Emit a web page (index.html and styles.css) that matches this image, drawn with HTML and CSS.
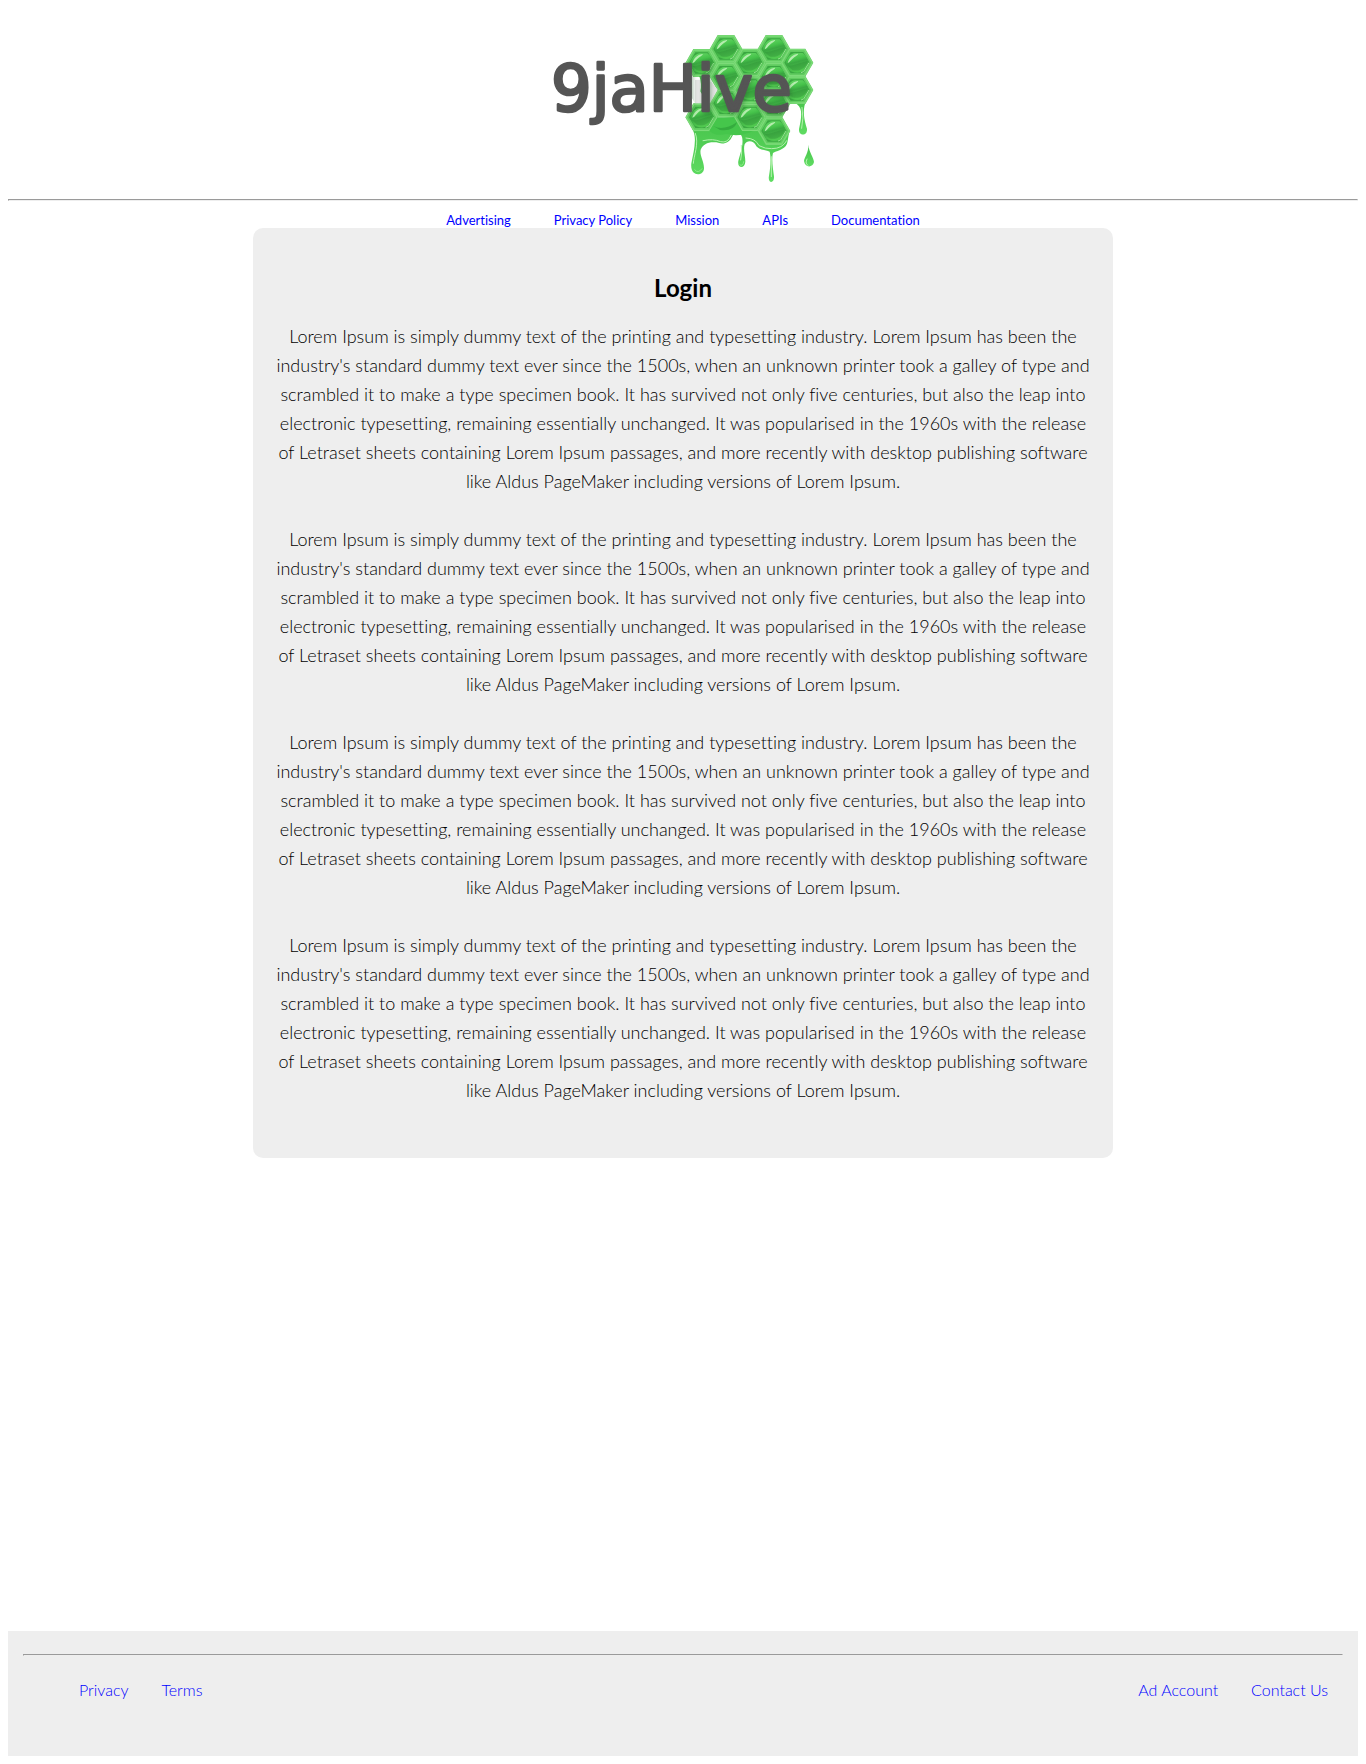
FILE: index.html
```html
<!DOCTYPE html>
<html lang="en">
<head>
<meta charset="utf-8">
<meta name="viewport" content="width=device-width, initial-scale=1">
<title>9jaHive - Login</title>
<link rel="stylesheet" href="styles.css">
</head>
<body>
<header class="header">
  <svg class="logo" viewBox="0 0 858 537" role="img" aria-label="9jaHive">
    <defs>
      <linearGradient id="cell" x1="0" y1="0" x2="0.3" y2="1">
        <stop offset="0" stop-color="#6cdc6a"/>
        <stop offset="0.4" stop-color="#45c24a"/>
        <stop offset="0.55" stop-color="#3aa741"/>
        <stop offset="1" stop-color="#51c950"/>
      </linearGradient>
      <linearGradient id="drip" x1="0" y1="0" x2="0" y2="1">
        <stop offset="0" stop-color="#46c24a"/>
        <stop offset="1" stop-color="#5fdc62"/>
      </linearGradient>
      <filter id="shade" x="-10%" y="-20%" width="120%" height="140%">
        <feGaussianBlur stdDeviation="7"/>
      </filter>
      <clipPath id="comb-area"><path d="M460 87H508L533 45H582L607 87H650L675 45H726L750 87H796L820 128L796 168L820 210L796 252H752L726 292L748 333L724 375H675L650 333H460L440 293L465 250L440 208V128Z"/></clipPath>
      <g id="hex">
        <path d="M-49 0L-25-42H25L49 0L25 42H-25Z" fill="#61cc60"/>
        <path d="M-46 0L-23-39H23L46 0L23 39H-23Z" fill="none" stroke="#7ddb79" stroke-width="4"/>
        <path d="M-38 0L-19-32H19L38 0L19 32H-19Z" fill="#3aa841"/>
        <path d="M-34 4C-33-12-22-26-6-29H17C27-22 33-11 34 0L18 27C0 34-18 28-24 22Z" fill="url(#cell)"/>
        <path d="M-28 1C-24-14-13-25 2-27C8-25-8-18-14-11C-19-6-24 1-28 1Z" fill="#b4edae"/>
        <path d="M-29 8C-12 12 15-2 32-5C28 17 6 28-14 22Z" fill="#2c8a35" opacity=".35"/>
        <path d="M12 30L20 27L36 0" fill="none" stroke="#95e48f" stroke-width="3"/>
      </g>
    </defs>
    <path fill="url(#drip)" d="M448 302L460 333C471 360 460 400 454 430C449 472 490 470 492 446C493 425 478 406 482 389C489 372 506 364 529 367C551 375 568 368 576 350C584 334 605 335 607 356C610 380 599 405 595 423C591 446 615 447 616 425C616 408 609 388 614 373C621 359 641 362 647 375C655 391 676 389 689 395C694 415 691 445 687 467C682 491 704 492 702 469C699 446 694 417 699 399C718 389 740 388 743 363L748 333L700 282Z"/>
    <path fill="url(#drip)" d="M744 235L796 248C787 273 793 301 801 326C803 350 775 349 777 327C784 297 790 266 771 253Z"/>
    <path fill="url(#drip)" d="M805 374C807 396 821 412 822 426C818 445 794 443 792 423C793 410 806 399 805 374Z"/>
    <g fill="none" stroke="#b5f3ae" stroke-width="3" stroke-linecap="round">
      <path d="M466 340C478 370 461 408 460 430M489 362Q520 355 542 365Q563 371 574 345M604 376Q607 400 602 420M618 354Q647 355 657 377Q676 387 695 386Q728 386 740 362M694 410V470M786 262Q792 295 785 325M801 417Q794 432 804 436"/>
      <path d="M464 449Q474 463 486 446M600 435Q609 440 611 425" stroke="#8ceb87"/>
    </g>
    <use href="#hex" x="485" y="129"/>
    <use href="#hex" x="558" y="87"/>
    <use href="#hex" x="558" y="170"/>
    <use href="#hex" x="558" y="250"/>
    <use href="#hex" x="630" y="128"/>
    <use href="#hex" x="630" y="210"/>
    <use href="#hex" x="702" y="87"/>
    <use href="#hex" x="702" y="170"/>
    <use href="#hex" x="702" y="250"/>
    <use href="#hex" x="771" y="128"/>
    <use href="#hex" x="771" y="210"/>
    <use href="#hex" x="485" y="292"/>
    <use href="#hex" x="630" y="292"/>
    <use href="#hex" x="702" y="333"/>
    <path d="M508 332L533 292H582L606 333H640Q600 352 560 342Q525 350 508 332Z" fill="#45c64b"/>
    <path d="M520 318Q550 334 592 306Q580 336 540 330Z" fill="#35ac3e"/>
    <path d="M465 180Q500 177 515 187L533 209L510 250H465Z" fill="#e5e5e5"/>
    <path d="M478 168H510Q493 182 492 214Q487 229 481 214Q486 193 478 168Z" fill="#43b84a"/>
    <g clip-path="url(#comb-area)">
      <text class="logo-shadow" x="37" y="279" filter="url(#shade)">9jaHive</text>
    </g>
    <text class="logo-text" x="33" y="274">9jaHive</text>
  </svg>
  <hr class="rule">
  <nav class="nav" aria-label="Main">
    <a href="#">Advertising</a>
    <a href="#">Privacy Policy</a>
    <a href="#">Mission</a>
    <a href="#">APIs</a>
    <a href="#">Documentation</a>
  </nav>
</header>
<main class="panel">
  <h1 class="title">Login</h1>
  <p>Lorem Ipsum is simply dummy text of the printing and typesetting industry. Lorem Ipsum has been the industry's standard dummy text ever since the 1500s, when an unknown printer took a galley of type and scrambled it to make a type specimen book. It has survived not only five centuries, but also the leap into electronic typesetting, remaining essentially unchanged. It was popularised in the 1960s with the release of Letraset sheets containing Lorem Ipsum passages, and more recently with desktop publishing software like Aldus PageMaker including versions of Lorem Ipsum.</p>
  <p>Lorem Ipsum is simply dummy text of the printing and typesetting industry. Lorem Ipsum has been the industry's standard dummy text ever since the 1500s, when an unknown printer took a galley of type and scrambled it to make a type specimen book. It has survived not only five centuries, but also the leap into electronic typesetting, remaining essentially unchanged. It was popularised in the 1960s with the release of Letraset sheets containing Lorem Ipsum passages, and more recently with desktop publishing software like Aldus PageMaker including versions of Lorem Ipsum.</p>
  <p>Lorem Ipsum is simply dummy text of the printing and typesetting industry. Lorem Ipsum has been the industry's standard dummy text ever since the 1500s, when an unknown printer took a galley of type and scrambled it to make a type specimen book. It has survived not only five centuries, but also the leap into electronic typesetting, remaining essentially unchanged. It was popularised in the 1960s with the release of Letraset sheets containing Lorem Ipsum passages, and more recently with desktop publishing software like Aldus PageMaker including versions of Lorem Ipsum.</p>
  <p>Lorem Ipsum is simply dummy text of the printing and typesetting industry. Lorem Ipsum has been the industry's standard dummy text ever since the 1500s, when an unknown printer took a galley of type and scrambled it to make a type specimen book. It has survived not only five centuries, but also the leap into electronic typesetting, remaining essentially unchanged. It was popularised in the 1960s with the release of Letraset sheets containing Lorem Ipsum passages, and more recently with desktop publishing software like Aldus PageMaker including versions of Lorem Ipsum.</p>
</main>
<footer class="footer">
  <hr class="rule">
  <nav class="footer-nav" aria-label="Footer">
    <div class="links">
      <a href="#">Privacy</a>
      <a href="#">Terms</a>
    </div>
    <div class="links">
      <a href="#">Ad Account</a>
      <a href="#">Contact Us</a>
    </div>
  </nav>
</footer>
</body>
</html>
```
FILE: styles.css
```css
* {
  box-sizing: border-box;
}

body {
  display: flex;
  flex-direction: column;
  min-height: 100vh;
  margin: 0;
  padding: 8px;
  background: #fff;
  color: #000;
  font-family: Lato, "Liberation Sans", sans-serif;
  font-weight: 300;
  font-variant-ligatures: no-common-ligatures;
}

a {
  color: #00f;
  text-decoration: none;
}

.header {
  display: flex;
  flex-direction: column;
  padding-top: 12px;
}

.logo {
  display: block;
  align-self: center;
  width: 286px;
  height: 179px;
}

.logo-text,
.logo-shadow {
  font-family: "DejaVu Sans", sans-serif;
  font-size: 192px;
  font-weight: 400;
  stroke-width: 8px;
  stroke-linejoin: round;
}

.logo-text {
  fill: #555;
  stroke: #555;
}

.logo-shadow {
  fill: #275e2b;
  stroke: #275e2b;
  opacity: 0.4;
}

.rule {
  width: 100%;
  margin: 0;
  border: 1px solid;
  border-color: #9a9a9a #eee #eee #9a9a9a;
}

.nav {
  display: flex;
  justify-content: center;
  gap: 43px;
  padding-top: 11px;
  font-size: 13px;
  font-weight: 400;
  line-height: 16px;
}

.panel {
  align-self: center;
  width: 100%;
  max-width: 860px;
  margin-bottom: 32px;
  padding: 45px 18px 53px;
  border-radius: 10px;
  background: #eee;
  font-size: 18px;
  line-height: 29px;
  text-align: center;
}

.title {
  margin: 0 0 20px;
  font-size: 24px;
  font-weight: 700;
  line-height: 29px;
}

.panel p {
  margin: 0 0 29px;
}

.panel p:last-child {
  margin-bottom: 0;
}

.footer {
  margin-top: auto;
  padding: 23px 15px 57px;
  background: #eee;
}

.footer-nav {
  display: flex;
  justify-content: space-between;
  padding: 24px 15px 0 56px;
  font-size: 16px;
  line-height: 19px;
}

.links {
  display: flex;
  gap: 33px;
}
```
